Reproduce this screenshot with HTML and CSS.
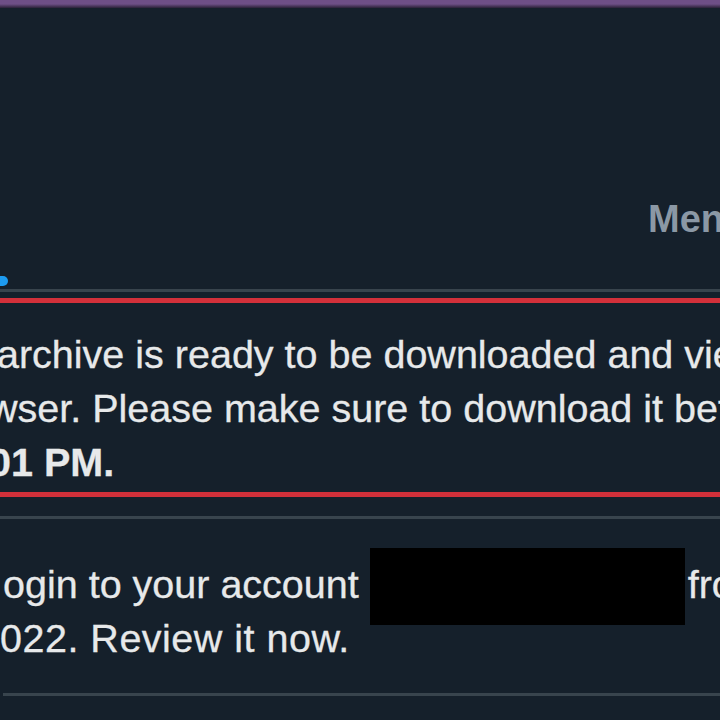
FILE: index.html
```html
<!DOCTYPE html>
<html lang="en">
  <head>
    <meta charset="UTF-8" />
    <meta name="viewport" content="width=device-width, initial-scale=1.0" />
    <title>Notifications</title>
    <link rel="stylesheet" href="styles.css">
  </head>
  <body>
    <div class="window-bar"></div>

    <nav class="tabs">
      <div class="tab tab-active">
        <span class="indicator"></span>
      </div>
      <div class="tab">
        <span class="tab-label">Mentions</span>
      </div>
    </nav>

    <section class="feed">
      <article class="note note-marked">
        <div class="highlight">
          <p class="note-text">
            <span class="line">archive is ready to be downloaded and viewed in your</span>
            <span class="line cut">wser. Please make sure to download it before</span>
            <span class="line cut"><strong>01 PM.</strong></span>
          </p>
        </div>
      </article>

      <article class="note note-plain">
        <p class="note-text">
          <span class="line">ogin to your account <span class="redacted">@account</span>from a new device</span>
          <span class="line nudge">022. Review it now.</span>
        </p>
      </article>
    </section>
  </body>
</html>
```

FILE: styles.css
```css
/* Reset */
* {
  margin: 0;
  padding: 0;
  box-sizing: border-box;
}

body {
  background-color: #15202b;
  color: #e7e9ea;
  font-family: "Liberation Sans", Arial, sans-serif;
  overflow: hidden;
}

/* Browser strip at the very top */
.window-bar {
  height: 8px;
  background: linear-gradient(#6e4f86 0, #6e4f86 4px, #2a2137 8px);
}

/* Tabs */
.tabs {
  display: grid;
  grid-template-columns: 648px 1fr;
  align-items: end;
  height: 284px;
  border-bottom: 3px solid #38444d;
}

.indicator {
  display: block;
  width: 60px;
  height: 10px;
  margin-left: -52px;
  margin-bottom: 3px;
  background-color: #1d9bf0;
  border-radius: 5px;
}

.tab-label {
  display: block;
  margin-bottom: 43px;
  font-size: 38px;
  line-height: 54px;
  font-weight: 700;
  color: #8b98a5;
  white-space: nowrap;
}

/* Notifications */
.note {
  border-bottom: 3px solid #38444d;
}

.note-marked {
  padding: 6px 0 19px;
}

.highlight {
  margin: 0 -20px;
  padding: 24px 20px 3px 12px;
  border: 5px solid #d2303a;
}

.note-plain {
  padding: 38px 0 28px 0;
  margin-left: 3px;
}

.line {
  display: block;
  font-size: 39.5px;
  line-height: 54px;
  white-space: nowrap;
  -webkit-text-stroke: 0.3px currentColor;
}

.line.cut {
  margin-left: -8px;
}

.line.nudge {
  margin-left: -3px;
  letter-spacing: 0.5px;
}

/* Blacked-out account name */
.redacted {
  display: inline-block;
  position: relative;
  width: 315px;
  margin-right: 3px;
  color: transparent;
  -webkit-text-stroke: 0;
}

.redacted::after {
  content: "";
  position: absolute;
  left: 0;
  right: 0;
  top: -9px;
  bottom: -14px;
  background-color: #000;
}
```
